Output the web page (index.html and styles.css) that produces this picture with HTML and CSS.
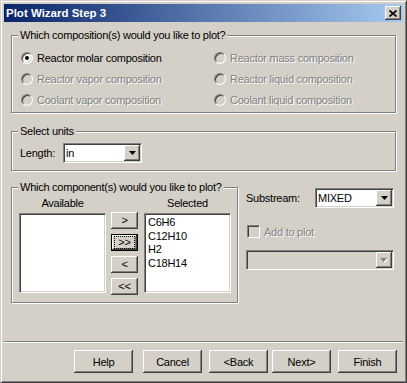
FILE: index.html
```html
<!DOCTYPE html>
<html lang="en">
<head>
    <meta charset="UTF-8">
    <meta name="viewport" content="width=device-width, initial-scale=1.0">
    <title>Plot Wizard Step 3</title>
    <link rel="stylesheet" href="styles.css">
</head>
<body>
    <div class="window">
        <div class="titlebar">
            <span class="title">Plot Wizard Step 3</span>
            <button class="close-btn" aria-label="Close">
                <svg width="8" height="7" viewBox="0 0 8 7">
                    <path d="M0.5 0.5 L7.5 6.5 M7.5 0.5 L0.5 6.5" stroke="#000" stroke-width="1.6" fill="none"/>
                </svg>
            </button>
        </div>

        <div class="dialog">
            <fieldset class="group">
                <legend>Which composition(s) would you like to plot?</legend>
                <div class="comp-grid">
                    <label class="radio"><span class="radio-box checked"></span>Reactor molar composition</label>
                    <label class="radio disabled"><span class="radio-box"></span>Reactor mass composition</label>
                    <label class="radio disabled"><span class="radio-box"></span>Reactor vapor composition</label>
                    <label class="radio disabled"><span class="radio-box"></span>Reactor liquid composition</label>
                    <label class="radio disabled"><span class="radio-box"></span>Coolant vapor composition</label>
                    <label class="radio disabled"><span class="radio-box"></span>Coolant liquid composition</label>
                </div>
            </fieldset>

            <fieldset class="group units-group">
                <legend>Select units</legend>
                <div class="units-row">
                    <span class="units-label">Length:</span>
                    <div class="combo">
                        <span class="combo-text">in</span>
                        <span class="combo-btn">
                            <svg width="7" height="4" viewBox="0 0 7 4"><polygon points="0,0 7,0 3.5,4" fill="#000"/></svg>
                        </span>
                    </div>
                </div>
            </fieldset>

            <div class="comp-row">
                <fieldset class="group components-group">
                    <legend>Which component(s) would you like to plot?</legend>
                    <div class="components">
                        <div class="list-col">
                            <div class="list-head">Available</div>
                            <div class="listbox"></div>
                        </div>
                        <div class="move-col">
                            <button class="btn move-btn">&gt;</button>
                            <button class="btn move-btn focused"><span class="focus-rect">&gt;&gt;</span></button>
                            <button class="btn move-btn">&lt;</button>
                            <button class="btn move-btn">&lt;&lt;</button>
                        </div>
                        <div class="list-col">
                            <div class="list-head">Selected</div>
                            <div class="listbox">
                                <div class="list-item">C6H6</div>
                                <div class="list-item">C12H10</div>
                                <div class="list-item">H2</div>
                                <div class="list-item">C18H14</div>
                            </div>
                        </div>
                    </div>
                </fieldset>

                <div class="side-panel">
                    <div class="substream-row">
                        <span class="substream-label">Substream:</span>
                        <div class="combo">
                            <span class="combo-text">MIXED</span>
                            <span class="combo-btn">
                                <svg width="7" height="4" viewBox="0 0 7 4"><polygon points="0,0 7,0 3.5,4" fill="#000"/></svg>
                            </span>
                        </div>
                    </div>
                    <label class="checkbox disabled"><span class="check-box"></span>Add to plot</label>
                    <div class="combo combo-wide disabled">
                        <span class="combo-text"></span>
                        <span class="combo-btn">
                            <svg width="8" height="5" viewBox="0 0 8 5">
                                <polygon points="1,1 8,1 4.5,5" fill="#fff"/>
                                <polygon points="0,0 7,0 3.5,4" fill="#808080"/>
                            </svg>
                        </span>
                    </div>
                </div>
            </div>
        </div>

        <div class="footer">
            <div class="separator"></div>
            <div class="button-row">
                <button class="btn footer-btn">Help</button>
                <button class="btn footer-btn btn-cancel">Cancel</button>
                <button class="btn footer-btn">&lt;Back</button>
                <button class="btn footer-btn btn-next">Next&gt;</button>
                <button class="btn footer-btn">Finish</button>
            </div>
        </div>
    </div>
</body>
</html>
```

FILE: styles.css
```css
* {
    box-sizing: border-box;
}
body {
    margin: 0;
    padding: 0;
    font-family: "Liberation Sans", Arial, sans-serif;
    font-size: 11px;
    letter-spacing: -0.25px;
    color: #000;
    background-color: #d4d0c8;
}
.window {
    width: 407px;
    height: 383px;
    display: flex;
    flex-direction: column;
    padding: 3px;
    background-color: #d4d0c8;
    border: 1px solid;
    border-color: #d4d0c8 #404040 #404040 #d4d0c8;
    box-shadow: inset 1px 1px #fff, inset -1px -1px #808080;
}
.titlebar {
    height: 18px;
    display: flex;
    align-items: center;
    justify-content: space-between;
    padding-left: 2px;
    padding-right: 2px;
    background: linear-gradient(to right, #0a246a, #a6caf0);
}
.title {
    color: #fff;
    font-weight: bold;
    font-size: 11.5px;
    letter-spacing: 0;
}
.close-btn {
    width: 16px;
    height: 14px;
    padding: 0;
    display: flex;
    align-items: center;
    justify-content: center;
    background-color: #d4d0c8;
    border: none;
    box-shadow: inset -1px -1px #404040, inset 1px 1px #fff, inset -2px -2px #808080, inset 2px 2px #d4d0c8;
}

/* group boxes */
.dialog {
    padding-top: 7px;
}
.group {
    display: block;
    min-width: 0;
    margin: 0 7px;
    padding: 0;
    border: 1px solid #808080;
    box-shadow: 1px 1px 0 #fff, inset 1px 1px 0 #fff;
}
.group legend {
    margin-left: 6px;
    padding: 0 2px;
    line-height: 13px;
    background-color: #d4d0c8;
}
.comp-grid {
    display: grid;
    grid-template-columns: 193px auto;
    grid-auto-rows: 21px;
    padding: 5px 0 2px 9px;
}
.radio {
    display: flex;
    align-items: center;
}
.radio-box {
    position: relative;
    width: 12px;
    height: 12px;
    margin-right: 4px;
    border-radius: 50%;
    background-color: #fff;
    border: 1px solid;
    border-color: #808080 #fff #fff #808080;
    box-shadow: inset 1px 1px #404040, inset -1px -1px #d4d0c8;
}
.radio-box.checked::after {
    content: '';
    position: absolute;
    top: 3px;
    left: 3px;
    width: 4px;
    height: 4px;
    border-radius: 50%;
    background-color: #000;
}
.disabled {
    color: #808080;
    text-shadow: 1px 1px 0 #fff;
}
.radio.disabled .radio-box {
    background-color: #d4d0c8;
}

.units-group {
    margin-top: 12px;
}
.units-row {
    display: flex;
    align-items: center;
    padding: 5px 0 7px 8px;
}
.units-label {
    width: 43px;
}
.combo {
    width: 79px;
    height: 20px;
    display: flex;
    padding: 1px;
    background-color: #fff;
    border: 1px solid;
    border-color: #808080 #fff #fff #808080;
    box-shadow: inset 1px 1px #404040, inset -1px -1px #d4d0c8;
}
.combo-text {
    flex: 1;
    padding-left: 1px;
    line-height: 16px;
}
.combo-btn {
    width: 16px;
    height: 16px;
    display: flex;
    align-items: center;
    justify-content: center;
    background-color: #d4d0c8;
    box-shadow: inset -1px -1px #404040, inset 1px 1px #fff, inset -2px -2px #808080, inset 2px 2px #d4d0c8;
}
.combo-wide {
    width: 148px;
}
.combo.disabled {
    background-color: #d4d0c8;
}

/* components */
.comp-row {
    display: flex;
    margin-top: 10px;
}
.components-group {
    width: 227px;
    flex: none;
    margin-right: 0;
}
.components {
    display: flex;
    padding: 2px 6px 7px 7px;
}
.list-col {
    width: 87px;
}
.list-head {
    height: 16px;
    line-height: 14px;
    text-align: center;
}
.listbox {
    height: 80px;
    margin-top: 1px;
    padding: 2px 2px;
    background-color: #fff;
    border: 1px solid;
    border-color: #808080 #fff #fff #808080;
    box-shadow: inset 1px 1px #404040, inset -1px -1px #d4d0c8;
}
.list-item {
    line-height: 13.7px;
    padding-left: 1px;
}
.move-col {
    width: 27px;
    display: flex;
    flex-direction: column;
    gap: 5px;
    margin: 0 6px 0 5px;
    padding-top: 16px;
}
.btn {
    padding: 0;
    font-family: inherit;
    font-size: 11px;
    letter-spacing: -0.25px;
    color: #000;
    background-color: #d4d0c8;
    border: none;
    box-shadow: inset -1px -1px #404040, inset 1px 1px #fff, inset -2px -2px #808080, inset 2px 2px #d4d0c8;
}
.move-btn {
    height: 17px;
    line-height: 15px;
}
.move-btn.focused {
    display: flex;
    align-items: center;
    justify-content: center;
    box-shadow: inset 0 0 0 1px #000, inset -2px -2px #404040, inset 2px 2px #fff, inset -3px -3px #808080;
}
.focus-rect {
    width: 19px;
    height: 11px;
    line-height: 10px;
    outline: 1px dotted #000;
}

.side-panel {
    width: 148px;
    margin-left: 8px;
    padding-top: 7px;
}
.substream-row {
    display: flex;
    align-items: center;
}
.substream-label {
    width: 69px;
}
.checkbox {
    display: flex;
    align-items: center;
    height: 13px;
    margin-top: 17px;
    margin-left: 1px;
}
.check-box {
    width: 13px;
    height: 13px;
    margin-right: 4px;
    background-color: #d4d0c8;
    border: 1px solid;
    border-color: #808080 #fff #fff #808080;
    box-shadow: inset 1px 1px #404040, inset -1px -1px #d4d0c8;
}
.side-panel .combo-wide {
    margin-top: 12px;
}

/* footer */
.footer {
    margin-top: auto;
}
.separator {
    height: 2px;
    border-top: 1px solid #808080;
    border-bottom: 1px solid #fff;
}
.button-row {
    display: flex;
    padding: 7px 0 6px 70px;
}
.footer-btn {
    width: 59px;
    height: 23px;
    margin-left: 7px;
}
.footer-btn:first-child {
    margin-left: 0;
}
.btn-cancel {
    margin-left: 10px;
}
.btn-next {
    margin-left: 4px;
}
```
